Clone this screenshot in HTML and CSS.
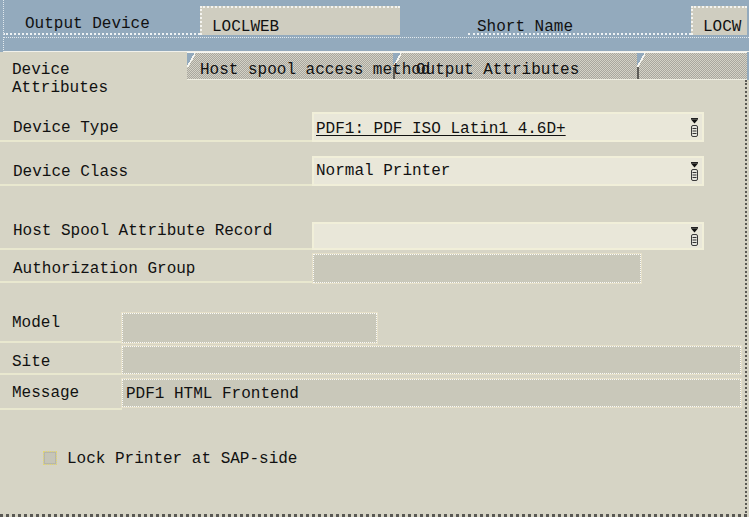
FILE: index.html
```html
<!DOCTYPE html>
<html>
<head>
<meta charset="utf-8">
<link rel="stylesheet" href="styles.css">
</head>
<body>
<header class="hdr">
  <div class="hdr-row">
    <div class="hdr-label">Output Device</div>
    <div class="hdr-field">LOCLWEB</div>
    <div class="hdr-label short">Short Name</div>
    <div class="hdr-field short">LOCW</div>
  </div>
  <div class="hdr-strip"></div>
</header>
<nav class="tabs">
  <div class="tab active">Device<br>Attributes</div>
  <div class="tab host">Host spool access method</div>
  <div class="tab out notch">Output Attributes</div>
  <div class="tab rest notch"></div>
</nav>
<main class="panel">
  <div class="row r1">
    <div class="lbl wide">Device Type</div>
    <div class="fld drop"><span class="ul">PDF1: PDF ISO Latin1 4.6D+</span>
      <svg class="dd" width="7" height="19" viewBox="0 0 7 19"><rect x="0" y="0" width="7" height="1.5" fill="#222"/><polygon points="0,1.5 7,1.5 3.5,5.5" fill="#111"/><rect x="0.5" y="7.5" width="6" height="11" rx="1.5" fill="#e4e4dc" stroke="#3a3a3a"/><line x1="1.5" y1="10.5" x2="5.5" y2="10.5" stroke="#333"/><line x1="1.5" y1="13" x2="5.5" y2="13" stroke="#333"/><line x1="1.5" y1="15.5" x2="5.5" y2="15.5" stroke="#333"/></svg>
    </div>
  </div>
  <div class="row r2">
    <div class="lbl wide">Device Class</div>
    <div class="fld drop"><span>Normal Printer</span>
      <svg class="dd" width="7" height="19" viewBox="0 0 7 19"><rect x="0" y="0" width="7" height="1.5" fill="#222"/><polygon points="0,1.5 7,1.5 3.5,5.5" fill="#111"/><rect x="0.5" y="7.5" width="6" height="11" rx="1.5" fill="#e4e4dc" stroke="#3a3a3a"/><line x1="1.5" y1="10.5" x2="5.5" y2="10.5" stroke="#333"/><line x1="1.5" y1="13" x2="5.5" y2="13" stroke="#333"/><line x1="1.5" y1="15.5" x2="5.5" y2="15.5" stroke="#333"/></svg>
    </div>
  </div>
  <div class="row r3">
    <div class="lbl wide">Host Spool Attribute Record</div>
    <div class="fld drop"><span></span>
      <svg class="dd" width="7" height="19" viewBox="0 0 7 19"><rect x="0" y="0" width="7" height="1.5" fill="#222"/><polygon points="0,1.5 7,1.5 3.5,5.5" fill="#111"/><rect x="0.5" y="7.5" width="6" height="11" rx="1.5" fill="#e4e4dc" stroke="#3a3a3a"/><line x1="1.5" y1="10.5" x2="5.5" y2="10.5" stroke="#333"/><line x1="1.5" y1="13" x2="5.5" y2="13" stroke="#333"/><line x1="1.5" y1="15.5" x2="5.5" y2="15.5" stroke="#333"/></svg>
    </div>
  </div>
  <div class="row r4">
    <div class="lbl auth">Authorization Group</div>
    <div class="fld off auth-f"></div>
  </div>
  <div class="row r5">
    <div class="lbl narrow">Model</div>
    <div class="fld off model-f"></div>
  </div>
  <div class="row r6">
    <div class="lbl narrow">Site</div>
    <div class="fld off long-f"></div>
  </div>
  <div class="row r7">
    <div class="lbl narrow">Message</div>
    <div class="fld off long-f">PDF1 HTML Frontend</div>
  </div>
  <div class="row chk-row">
    <span class="chk"></span>
    <span class="chk-text">Lock Printer at SAP-side</span>
  </div>
</main>
</body>
</html>
```
FILE: styles.css
```css
* { box-sizing: border-box; margin: 0; padding: 0; }
html, body { width: 749px; height: 517px; overflow: hidden; }
body {
  background: #d6d4c5;
  font-family: "Liberation Mono", "DejaVu Sans Mono", monospace;
  font-size: 16px;
  line-height: 18px;
  color: #111;
}

/* header */
.hdr { background: #93aabd; height: 52px; display: flex; flex-direction: column; }
.hdr-row { height: 35px; display: flex; align-items: flex-start; flex: none; }
.hdr-label {
  margin-left: 3px; width: 197px; height: 35px;
  border-left: 1px dotted #dfe7ec;
  border-bottom: 2px dotted #eef2f4;
  padding: 15px 0 0 21px;
  white-space: nowrap;
}
.hdr-label.short { margin-left: 68px; width: 223px; border-left: none; padding: 18px 0 0 9px; }
.hdr-field {
  margin-top: 6px; width: 200px; height: 29px;
  background: #cfcdc0;
  border-top: 2px dotted #f4f4f0; border-left: 2px dotted #f4f4f0;
  padding: 10px 0 0 10px;
  white-space: nowrap; overflow: hidden;
}
.hdr-field.short { width: 56px; padding-left: 10px; }
.hdr-strip {
  flex: 1; margin: 2px 0 0 3px;
  border-top: 1px dotted #e3eaee;
  border-left: 1px dotted #e3eaee;
  border-bottom: 1px solid #f1f1ec;
}

/* tabs */
.tabs { display: flex; height: 28px; align-items: flex-start; background: #93aabd; }
.tab {
  height: 28px; flex: none; white-space: nowrap;
  padding: 8px 0 0 13px;
  border-top: 1px solid #f6f6f0;
  border-bottom: 1px solid #efeee2;
  background:
    linear-gradient(to bottom right, #93aabd 46%, #f6f6f0 46% 58%, transparent 58%) 0 0 / 8px 14px no-repeat,
    repeating-conic-gradient(#a9a79e 0 25%, #d4d2c6 0 50%) 0 0 / 2px 2px;
}
.tab.active {
  width: 187px; height: 46px; padding: 9px 0 0 12px;
  background: #d6d4c5; border-bottom: none; border-top: none;
  white-space: normal;
}
.tab.host { width: 206px; z-index: 1; }
.tab.out { width: 244px; padding-left: 23px; }
.tab.rest { flex: 1; margin-right: 2px; }
.tab.notch {
  background:
    linear-gradient(to bottom right, #93aabd 46%, #f6f6f0 46% 58%, transparent 58%) 0 0 / 8px 14px no-repeat,
    linear-gradient(#5e5d58, #5e5d58) 0 14px / 2px 100% no-repeat,
    repeating-conic-gradient(#a9a79e 0 25%, #d4d2c6 0 50%) 0 0 / 2px 2px;
}

/* panel */
.panel {
  height: 437px; width: 747px;
  border-right: 2px dotted #5a5954;
  border-bottom: 3px dotted #5a5954;
  display: flex; flex-direction: column;
  padding-top: 32px;
}
.row { display: flex; flex: none; }
.lbl {
  flex: none; padding-left: 13px; white-space: nowrap;
  border-bottom: 2px solid #e9e8cf;
  display: flex; align-items: center;
}
.lbl.wide { width: 312px; padding-top: 3px; }
.lbl.auth { width: 313px; align-items: flex-start; padding-top: 10px; }
.lbl.narrow { width: 122px; padding-left: 12px; align-items: flex-start; }

.fld { flex: none; white-space: nowrap; display: flex; align-items: center; }
.fld.drop {
  width: 392px; height: 30px;
  background: #e9e7d9;
  border: 2px solid #f1efd9;
  padding: 0 4px 0 2px;
  justify-content: space-between;
}
.fld.off {
  background: #c9c8ba;
  border: 1px dotted #fbfbf8;
  box-shadow: 0 0 0 1px #e6e0c9;
  padding-left: 3px;
}
.ul { text-decoration: underline; text-underline-offset: 2px; }
.dd { display: block; }

.r1 { height: 30px; }
.r1 .fld span { padding-top: 3px; }
.r2 { height: 30px; margin-top: 14px; }
.r3 { height: 38px; margin-top: 26px; }
.r3 .lbl { align-items: flex-start; padding-top: 10px; }
.r3 .fld { height: 28px; align-self: flex-end; }
.r4 { height: 33px; }
.auth-f { width: 328px; height: 29px; margin-top: 4px; }
.r5 { height: 30px; margin-top: 30px; }
.r5 .lbl { padding-top: 1px; }
.model-f { width: 255px; height: 30px; }
.r6 { height: 32px; }
.r6 .lbl { padding-top: 10px; }
.long-f { width: 619px; height: 28px; margin-top: 3px; }
.r7 { height: 35px; }
.r7 .lbl { padding-top: 9px; }
.r7 .long-f { margin-top: 4px; padding-top: 1px; }

.chk-row { margin-top: 39px; height: 18px; align-items: center; padding-left: 43px; }
.chk { width: 14px; height: 14px; background: #c6c5b8; border: 1px dotted #e4d76e; box-shadow: inset 0 0 0 1px #b7b6aa; }
.chk-text { margin-left: 10px; white-space: nowrap; padding-top: 2px; }
```
